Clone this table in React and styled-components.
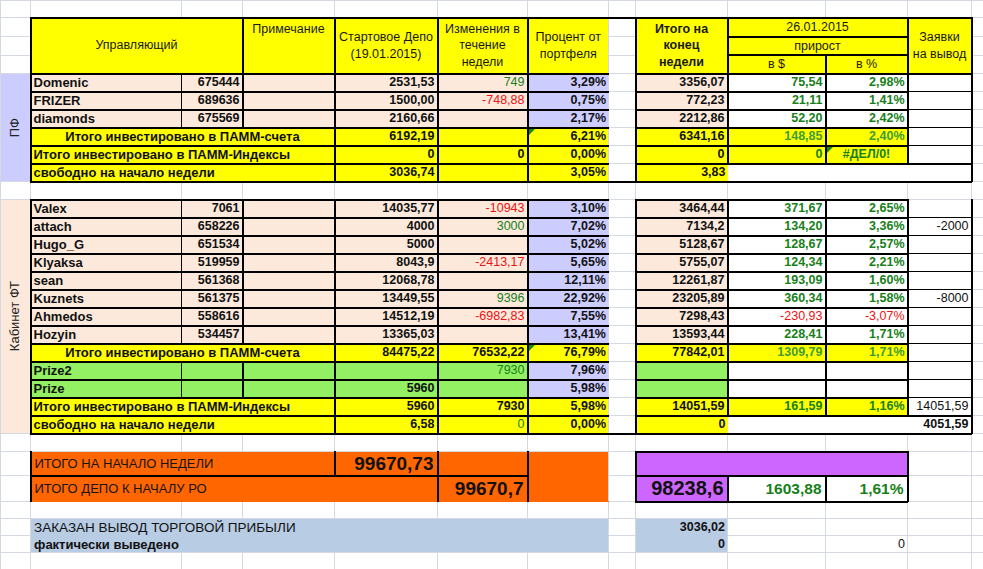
import React from 'react'
import styled, { createGlobalStyle, css } from 'styled-components'

const GRID = '#d4d8e0'
const INK = '#000'
const YELLOW = '#ffff00'
const PEACH = '#fce9dc'
const LAVENDER = '#ccccff'
const LIME = '#92f062'
const ORANGE = '#ff6600'
const VIOLET = '#cc66ff'
const STEEL = '#b8cce4'

const tones = {
  green: '#17801a',
  leaf: '#3f9c32',
  red: '#ee1111',
}

// A .. M, same widths as the sheet columns
const widths = [30, 151, 61, 92, 103, 90, 81, 27, 92, 98, 82, 64, 12]

const GlobalStyle = createGlobalStyle`
  html, body {
    margin: 0;
    padding: 0;
    background: #fff;
    overflow: hidden;
  }
  body {
    font-family: "Liberation Sans", Arial, sans-serif;
  }
`

const Sheet = styled.table`
  border-collapse: collapse;
  table-layout: fixed;
  width: 983px;
  font-family: "Liberation Sans", Arial, sans-serif;
  font-size: 12.5px;
  color: #111;
`

const Col = styled.col`
  width: ${p => p.$w}px;
`

const Row = styled.tr`
  height: ${p => p.$h ?? 18}px;
`

const Cell = styled.td`
  padding: 0 2px;
  border: 1px solid ${GRID};
  background: ${p => p.$bg || '#fff'};
  text-align: ${p => p.$align || 'left'};
  font-weight: ${p => (p.$bold ? 700 : 400)};
  color: ${p => tones[p.$tone] || '#111'};
  white-space: nowrap;
  overflow: hidden;
  line-height: 15px;
  vertical-align: middle;
  position: relative;
  ${p => p.$flag && css`
    &::before {
      content: '';
      position: absolute;
      left: 0;
      top: 0;
      border-style: solid;
      border-width: 6px 6px 0 0;
      border-color: #138a13 transparent transparent transparent;
    }
  `}
`

const Blank = styled(Cell)``

const Boxed = styled(Cell)`
  border: 2px solid ${INK};
  ${p => p.$thinL && css`border-left-width: 1px;`}
  ${p => p.$thinR && css`border-right-width: 1px;`}
  ${p => p.$thinY && css`border-top-width: 1px; border-bottom-width: 1px;`}
  ${p => p.$softR && css`border-right: 1px solid ${GRID};`}
  ${p => p.$openL && css`border-left-style: hidden;`}
  ${p => p.$openR && css`border-right-style: hidden;`}
`

const Head = styled(Boxed)`
  background: ${YELLOW};
  text-align: center;
  white-space: normal;
  line-height: 16.5px;
  color: #1a1a1a;
  vertical-align: ${p => (p.$top ? 'top' : 'middle')};
  padding-top: ${p => (p.$top ? '2px' : '0')};
`

const Name = styled(Boxed).attrs({ $thinR: true })`
  font-weight: 700;
  font-size: 13px;
`

const Acct = styled(Boxed).attrs({ $thinL: true })`
  font-weight: 700;
  text-align: right;
`

const Amount = styled(Boxed)`
  text-align: ${p => p.$align || 'right'};
  font-weight: ${p => (p.$light ? 400 : 700)};
`

const Share = styled(Amount).attrs({ $softR: true })``

const Request = styled(Amount).attrs({ $thinY: true })``

const Caption = styled(Boxed)`
  background: ${YELLOW};
  font-weight: 700;
  font-size: 13px;
  text-align: ${p => (p.$center ? 'center' : 'left')};
`

const Gap = styled(Cell)`
  ${p => p.$cap && css`border-top: 2px solid ${INK};`}
  ${p => p.$base && css`border-bottom: 2px solid ${INK};`}
`

const Side = styled(Cell)`
  padding: 0;
  text-align: center;
`

const SideText = styled.div`
  writing-mode: vertical-rl;
  transform: rotate(180deg);
  margin: 0 auto;
  font-size: 13px;
  line-height: 16px;
  color: #222;
`

const Band = styled(Cell)`
  background: ${ORANGE};
  font-size: 13px;
  color: #151515;
  padding-left: 3px;
  border-color: ${ORANGE};
  ${p => p.$left && css`border-left: 2px solid ${INK};`}
  ${p => p.$right && css`border-right: 2px solid ${INK};`}
  ${p => p.$under && css`border-bottom: 2px solid ${INK};`}
  ${p => p.$edgeR && css`border-right-color: ${GRID};`}
`

const Figure = styled(Band)`
  text-align: right;
  font-weight: 700;
  font-size: 19px;
  padding-right: 3px;
  color: #111;
`

const Pool = styled(Boxed)`
  background: ${p => p.$bg || VIOLET};
  text-align: right;
  font-weight: 700;
  font-size: ${p => (p.$big ? 20 : 15.5)}px;
  padding-right: 3px;
`

const Memo = styled(Cell)`
  background: ${STEEL};
  font-size: ${p => (p.$bold ? 13 : 13.5)}px;
  font-weight: ${p => (p.$bold ? 700 : 400)};
  padding-left: 3px;
  ${p => p.$joined && css`border-bottom-color: ${STEEL};`}
  ${p => p.$align === 'right' && css`text-align: right; font-size: 12.5px; font-weight: 700;`}
`

const pfManagers = [
  { name: 'Domenic', id: '675444', start: '2531,53', chg: '749', pct: '3,29%', end: '3356,07', gain: '75,54', gainPct: '2,98%' },
  { name: 'FRIZER', id: '689636', start: '1500,00', chg: '-748,88', pct: '0,75%', end: '772,23', gain: '21,11', gainPct: '1,41%' },
  { name: 'diamonds', id: '675569', start: '2160,66', chg: '', pct: '2,17%', end: '2212,86', gain: '52,20', gainPct: '2,42%' },
]

const ftManagers = [
  { name: 'Valex', id: '7061', start: '14035,77', chg: '-10943', pct: '3,10%', end: '3464,44', gain: '371,67', gainPct: '2,65%' },
  { name: 'attach', id: '658226', start: '4000', chg: '3000', pct: '7,02%', end: '7134,2', gain: '134,20', gainPct: '3,36%', req: '-2000' },
  { name: 'Hugo_G', id: '651534', start: '5000', chg: '', pct: '5,02%', end: '5128,67', gain: '128,67', gainPct: '2,57%' },
  { name: 'Klyaksa', id: '519959', start: '8043,9', chg: '-2413,17', pct: '5,65%', end: '5755,07', gain: '124,34', gainPct: '2,21%' },
  { name: 'sean', id: '561368', start: '12068,78', chg: '', pct: '12,11%', end: '12261,87', gain: '193,09', gainPct: '1,60%' },
  { name: 'Kuznets', id: '561375', start: '13449,55', chg: '9396', pct: '22,92%', end: '23205,89', gain: '360,34', gainPct: '1,58%', req: '-8000' },
  { name: 'Ahmedos', id: '558616', start: '14512,19', chg: '-6982,83', pct: '7,55%', end: '7298,43', gain: '-230,93', gainPct: '-3,07%' },
  { name: 'Hozyin', id: '534457', start: '13365,03', chg: '', pct: '13,41%', end: '13593,44', gain: '228,41', gainPct: '1,71%' },
]

const isNeg = v => v.startsWith('-')

function BlankRow({ h }) {
  return (
    <Row $h={h}>
      {widths.map((_, i) => <Blank key={i} />)}
    </Row>
  )
}

function ManagerRow({ m, lead }) {
  const gainTone = isNeg(m.gain) ? 'red' : 'green'
  return (
    <Row>
      {lead}
      <Name $bg={PEACH}>{m.name}</Name>
      <Acct $bg={PEACH}>{m.id}</Acct>
      <Amount $bg={PEACH} />
      <Amount $bg={PEACH}>{m.start}</Amount>
      <Amount $bg={PEACH} $light $tone={isNeg(m.chg) ? 'red' : 'green'}>{m.chg}</Amount>
      <Share $bg={LAVENDER}>{m.pct}</Share>
      <Gap />
      <Amount $bg={PEACH}>{m.end}</Amount>
      <Amount $tone={gainTone} $light={gainTone === 'red'}>{m.gain}</Amount>
      <Amount $tone={gainTone} $light={gainTone === 'red'}>{m.gainPct}</Amount>
      <Request $light>{m.req}</Request>
      <Blank />
    </Row>
  )
}

function HeaderRows() {
  return (
    <>
      <Row $h={19}>
        <Blank />
        <Head colSpan={2} rowSpan={3}>Управляющий</Head>
        <Head rowSpan={3} $top>Примечание</Head>
        <Head rowSpan={3}>Стартовое Депо<br />(19.01.2015)</Head>
        <Head rowSpan={3}>Изменения в<br />течение<br />недели</Head>
        <Head rowSpan={3} $softR>Процент от<br />портфеля</Head>
        <Gap $cap />
        <Head rowSpan={3} $bold>Итого на<br />конец<br />недели</Head>
        <Head colSpan={2}>26.01.2015</Head>
        <Head rowSpan={3}>Заявки<br />на вывод</Head>
        <Blank />
      </Row>
      <Row>
        <Blank />
        <Gap />
        <Head colSpan={2}>прирост</Head>
        <Blank />
      </Row>
      <Row>
        <Blank />
        <Gap />
        <Head>в $</Head>
        <Head>в %</Head>
        <Blank />
      </Row>
    </>
  )
}

function FreeRow({ start, chg, chgTone, pct, end, req }) {
  return (
    <Row>
      <Caption colSpan={3}>свободно на начало недели</Caption>
      <Amount $bg={YELLOW}>{start}</Amount>
      <Amount $bg={YELLOW} $light={!!chgTone} $tone={chgTone}>{chg}</Amount>
      <Share $bg={YELLOW}>{pct}</Share>
      <Gap $base />
      <Amount $bg={YELLOW} $openR>{end}</Amount>
      <Amount $openL $openR />
      <Amount $openR />
      <Amount>{req}</Amount>
      <Blank />
    </Row>
  )
}

export default function App() {
  return (
    <>
      <GlobalStyle />
      <Sheet>
        <colgroup>
          {widths.map((w, i) => <Col key={i} $w={w} />)}
        </colgroup>
        <tbody>
          <BlankRow h={17} />
          <HeaderRows />

          {pfManagers.map((m, i) => (
            <ManagerRow
              key={m.name}
              m={m}
              lead={i === 0 ? (
                <Side rowSpan={6} $bg={LAVENDER}><SideText>ПФ</SideText></Side>
              ) : null}
            />
          ))}
          <Row>
            <Caption colSpan={3} $center>Итого инвестировано в ПАММ-счета</Caption>
            <Amount $bg={YELLOW}>6192,19</Amount>
            <Amount $bg={YELLOW} />
            <Share $bg={YELLOW} $flag>6,21%</Share>
            <Gap />
            <Amount $bg={YELLOW}>6341,16</Amount>
            <Amount $bg={YELLOW} $tone="leaf">148,85</Amount>
            <Amount $bg={YELLOW} $tone="leaf">2,40%</Amount>
            <Request />
            <Blank />
          </Row>
          <Row>
            <Caption colSpan={3}>Итого инвестировано в ПАММ-Индексы</Caption>
            <Amount $bg={YELLOW}>0</Amount>
            <Amount $bg={YELLOW}>0</Amount>
            <Share $bg={YELLOW}>0,00%</Share>
            <Gap />
            <Amount $bg={YELLOW}>0</Amount>
            <Amount $bg={YELLOW} $tone="green">0</Amount>
            <Amount $bg={YELLOW} $tone="green" $align="center" $flag>#ДЕЛ/0!</Amount>
            <Request />
            <Blank />
          </Row>
          <FreeRow start="3036,74" pct="3,05%" end="3,83" />

          <BlankRow />

          {ftManagers.map((m, i) => (
            <ManagerRow
              key={m.name}
              m={m}
              lead={i === 0 ? (
                <Side rowSpan={13} $bg={PEACH}><SideText>Кабинет ФТ</SideText></Side>
              ) : null}
            />
          ))}
          <Row>
            <Caption colSpan={3} $center>Итого инвестировано в ПАММ-счета</Caption>
            <Amount $bg={YELLOW}>84475,22</Amount>
            <Amount $bg={YELLOW}>76532,22</Amount>
            <Share $bg={YELLOW} $flag>76,79%</Share>
            <Gap />
            <Amount $bg={YELLOW}>77842,01</Amount>
            <Amount $bg={YELLOW} $tone="leaf">1309,79</Amount>
            <Amount $bg={YELLOW} $tone="leaf">1,71%</Amount>
            <Request />
            <Blank />
          </Row>
          <Row>
            <Name $bg={LIME}>Prize2</Name>
            <Acct $bg={LIME} />
            <Amount $bg={LIME} />
            <Amount $bg={LIME} />
            <Amount $bg={LIME} $light $tone="green">7930</Amount>
            <Share $bg={LAVENDER}>7,96%</Share>
            <Gap />
            <Amount $bg={LIME} />
            <Amount />
            <Amount />
            <Request />
            <Blank />
          </Row>
          <Row>
            <Name $bg={LIME}>Prize</Name>
            <Acct $bg={LIME} />
            <Amount $bg={LIME} />
            <Amount $bg={LIME}>5960</Amount>
            <Amount $bg={LIME} />
            <Share $bg={LAVENDER}>5,98%</Share>
            <Gap />
            <Amount $bg={LIME} />
            <Amount />
            <Amount />
            <Request />
            <Blank />
          </Row>
          <Row>
            <Caption colSpan={3}>Итого инвестировано в ПАММ-Индексы</Caption>
            <Amount $bg={YELLOW}>5960</Amount>
            <Amount $bg={YELLOW}>7930</Amount>
            <Share $bg={YELLOW}>5,98%</Share>
            <Gap />
            <Amount $bg={YELLOW}>14051,59</Amount>
            <Amount $bg={YELLOW} $tone="green">161,59</Amount>
            <Amount $bg={YELLOW} $tone="green">1,16%</Amount>
            <Request $light>14051,59</Request>
            <Blank />
          </Row>
          <FreeRow start="6,58" chg="0" chgTone="green" pct="0,00%" end="0" req="4051,59" />

          <BlankRow />

          <Row $h={24}>
            <Blank />
            <Band colSpan={3} $left $right $under>ИТОГО НА НАЧАЛО НЕДЕЛИ</Band>
            <Figure $right $under>99670,73</Figure>
            <Band $right $under />
            <Band rowSpan={2} $edgeR />
            <Blank />
            <Pool colSpan={3} />
            <Blank />
            <Blank />
          </Row>
          <Row $h={26}>
            <Blank />
            <Band colSpan={4} $left $right>ИТОГО ДЕПО К НАЧАЛУ РО</Band>
            <Figure $right>99670,7</Figure>
            <Blank />
            <Pool $big>98238,6</Pool>
            <Pool $bg="#fff" $tone="green">1603,88</Pool>
            <Pool $bg="#fff" $tone="green">1,61%</Pool>
            <Blank />
            <Blank />
          </Row>

          <BlankRow h={17} />

          <Row $h={17}>
            <Blank />
            <Memo colSpan={6} $joined>ЗАКАЗАН ВЫВОД ТОРГОВОЙ ПРИБЫЛИ</Memo>
            <Blank />
            <Memo $joined $align="right">3036,02</Memo>
            <Blank />
            <Blank />
            <Blank />
            <Blank />
          </Row>
          <Row $h={17}>
            <Blank />
            <Memo colSpan={6} $bold>фактически выведено</Memo>
            <Blank />
            <Memo $align="right">0</Memo>
            <Blank />
            <Blank $align="right">0</Blank>
            <Blank />
            <Blank />
          </Row>

          <BlankRow />
        </tbody>
      </Sheet>
    </>
  )
}
